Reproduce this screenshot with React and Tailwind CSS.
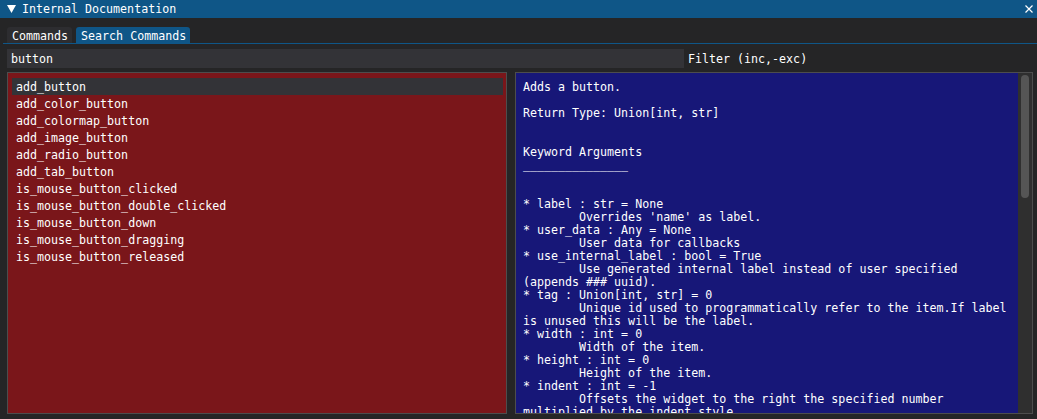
const commands = [
    "add_button",
    "add_color_button",
    "add_colormap_button",
    "add_image_button",
    "add_radio_button",
    "add_tab_button",
    "is_mouse_button_clicked",
    "is_mouse_button_double_clicked",
    "is_mouse_button_down",
    "is_mouse_button_dragging",
    "is_mouse_button_released",
]

const T = "        "

const docLines = [
    "Adds a button.",
    "",
    "Return Type: Union[int, str]",
    "",
    "",
    "Keyword Arguments",
    "_______________",
    "",
    "",
    "* label : str = None",
    T + "Overrides 'name' as label.",
    "* user_data : Any = None",
    T + "User data for callbacks",
    "* use_internal_label : bool = True",
    T + "Use generated internal label instead of user specified",
    "(appends ### uuid).",
    "* tag : Union[int, str] = 0",
    T + "Unique id used to programmatically refer to the item.If label",
    "is unused this will be the label.",
    "* width : int = 0",
    T + "Width of the item.",
    "* height : int = 0",
    T + "Height of the item.",
    "* indent : int = -1",
    T + "Offsets the widget to the right the specified number",
    "multiplied by the indent style.",
]

export default function App() {

    return (
        <div className="w-[1037px] h-[419px] overflow-hidden bg-[#252526] text-white flex flex-col font-['DejaVu_Sans_Mono',monospace] text-[11.65px] leading-[13px]">
            <TitleBar />
            <Tabs />
            <FilterRow />
            <div className="flex gap-[8px] pl-[7px] pr-[4px] mt-[4px] h-[342px]">
                <CommandList />
                <DocPanel />
            </div>
        </div>
    )

}

function TitleBar() {

    return (
        <div className="h-[18px] bg-[#0f5687] flex items-center justify-between pl-[7px] pr-[4px]">
            <div className="flex items-center">
                <svg width="9" height="8" viewBox="0 0 9 8">
                    <polygon points="0,0 9,0 4.5,8" fill="#fff" />
                </svg>
                <span className="pl-[6px] whitespace-pre">Internal Documentation</span>
            </div>
            <svg width="8" height="8" viewBox="0 0 8 8">
                <path d="M0.5 0.5 L7.5 7.5 M7.5 0.5 L0.5 7.5" stroke="#fff" strokeWidth="1.2" />
            </svg>
        </div>
    )

}

function Tabs() {

    return (
        <div className="mt-[9px]">
            <div className="flex gap-[4px] pl-[7px] h-[16px]">
                <div className="bg-[#2d2d30] rounded-t-[3px] pl-[5px] pr-[4px] pt-[2px] flex items-center">Commands</div>
                <div className="bg-[#0f5687] rounded-t-[3px] pl-[5px] pr-[4px] pt-[2px] flex items-center whitespace-pre">Search Commands</div>
            </div>
            <div className="h-[1px] bg-[#0f5687] ml-[3px]"></div>
        </div>
    )

}

function FilterRow() {

    return (
        <div className="flex items-center mt-[5px] pl-[7px]">
            <div className="w-[677px] h-[19px] bg-[#333337] flex items-center pl-[4px] pt-[2px]">button</div>
            <div className="pl-[4px] pt-[2px] whitespace-pre">Filter (inc,-exc)</div>
        </div>
    )

}

function CommandList() {

    return (
        <div className="w-[500px] h-full border border-[#4d4d4d] bg-[#7a161a] pt-[5px] pl-[4px] pr-[3px]">
            {commands.map((c, i) => (
                <div key={c} className={`h-[17px] flex items-center pl-[4px] pt-[2px] ${i === 0 ? "bg-[#333337]" : ""}`}>{c}</div>
            ))}
        </div>
    )

}

function DocPanel() {

    return (
        <div className="flex-1 h-full border border-[#4d4d4d] bg-[#171778] flex overflow-hidden">
            <div className="flex-1 pt-[8px] pl-[7px] overflow-hidden">
                {docLines.map((l, i) => (
                    <div key={i} className="h-[13px] whitespace-pre">{l}</div>
                ))}
            </div>
            <div className="w-[14px] bg-[#2f2f2f] pt-[2px]">
                <div className="mx-[3px] h-[123px] rounded-full bg-[#555555]"></div>
            </div>
        </div>
    )

}
